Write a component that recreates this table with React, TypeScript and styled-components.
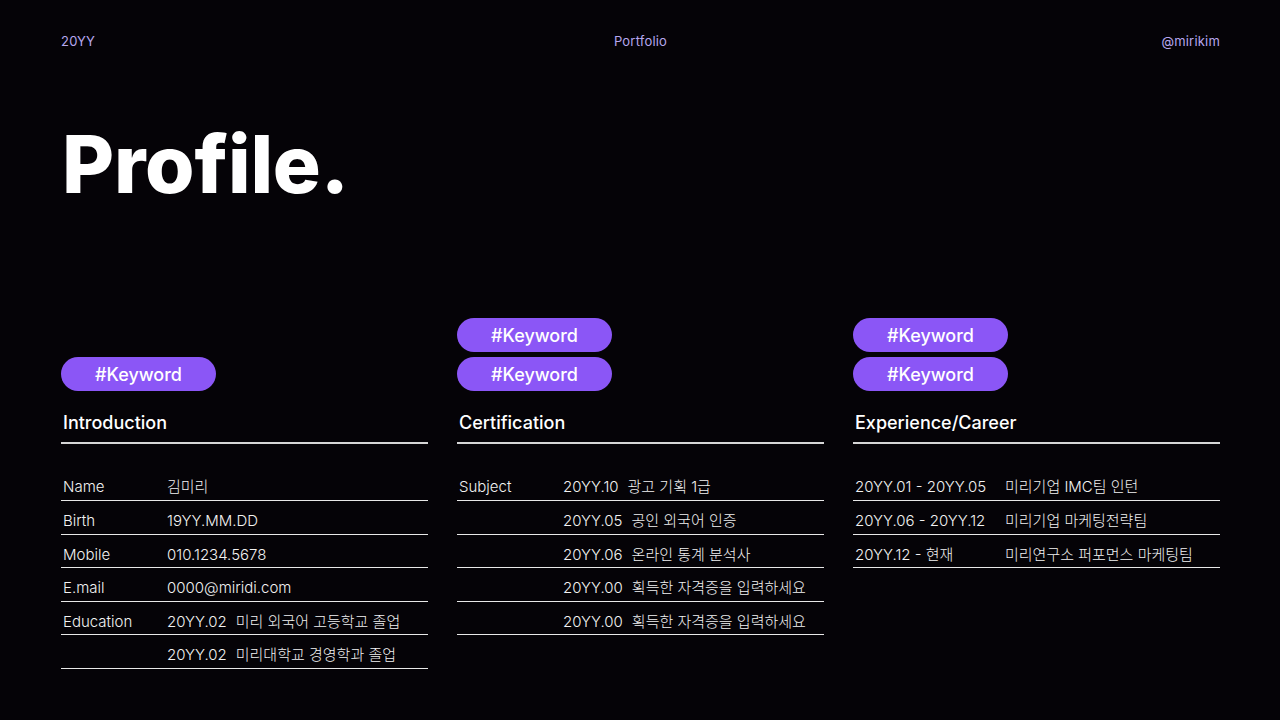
import React from "react";
import styled, { createGlobalStyle } from "styled-components";

const Global = createGlobalStyle`
  html, body { margin: 0; padding: 0; background: #050307; }
  body { font-family: Inter, "Noto Sans CJK KR", sans-serif; color: #fff; }
  * { box-sizing: border-box; }
`;

const Page = styled.div`
  width: 1280px;
  height: 720px;
  padding: 33px 60px 0 61px;
  background: #050307;
  overflow: hidden;
`;

const Header = styled.header`
  display: grid;
  grid-template-columns: 1fr auto 1fr;
  align-items: center;
  font-size: 13px;
  line-height: 16px;
  color: #b6a7ee;
  font-weight: 400;
  letter-spacing: 0.2px;
`;

const HeadItem = styled.span<{ $align: "left" | "center" | "right" }>`
  text-align: ${(p) => p.$align};
`;

const Title = styled.h1`
  margin: 75px 0 0 1px;
  font-size: 80px;
  line-height: 80px;
  font-weight: 800;
  letter-spacing: -0.2px;
  color: #fff;
`;

const Columns = styled.div`
  margin-top: 114px;
  display: grid;
  grid-template-columns: repeat(3, 367px);
  column-gap: 29px;
`;

const Column = styled.section``;

const PillStack = styled.div`
  height: 73px;
  display: flex;
  flex-direction: column;
  justify-content: flex-end;
  gap: 5px;
`;

const Pill = styled.div`
  width: 155px;
  height: 34px;
  border-radius: 17px;
  background: #8b56f6;
  color: #fff;
  font-size: 18px;
  font-weight: 500;
  display: flex;
  align-items: center;
  justify-content: center;
`;

const Heading = styled.h2`
  margin: 20px 0 0;
  padding: 0 0 7px 2px;
  font-size: 18px;
  line-height: 24px;
  font-weight: 500;
  border-bottom: 2px solid #d6d6d6;
`;

const Table = styled.div`
  margin-top: 23.4px;
`;

const Row = styled.div<{ $labelWidth: number }>`
  display: grid;
  grid-template-columns: ${(p) => p.$labelWidth}px 1fr;
  padding: 10px 0 2.6px 2px;
  border-bottom: 1px solid #e8e8e8;
  font-size: 15px;
  line-height: 20px;
  font-weight: 300;
  color: #f2f2f2;
  white-space: nowrap;
`;

const Cell = styled.span``;

const Gap = styled.span`
  display: inline-block;
  width: 9px;
`;

type Item = [string, string, string?];

const intro: Item[] = [
  ["Name", "김미리"],
  ["Birth", "19YY.MM.DD"],
  ["Mobile", "010.1234.5678"],
  ["E.mail", "0000@miridi.com"],
  ["Education", "20YY.02", "미리 외국어 고등학교 졸업"],
  ["", "20YY.02", "미리대학교 경영학과 졸업"],
];

const cert: Item[] = [
  ["Subject", "20YY.10", "광고 기획 1급"],
  ["", "20YY.05", "공인 외국어 인증"],
  ["", "20YY.06", "온라인 통계 분석사"],
  ["", "20YY.00", "획득한 자격증을 입력하세요"],
  ["", "20YY.00", "획득한 자격증을 입력하세요"],
];

const career: Item[] = [
  ["20YY.01 - 20YY.05", "미리기업 IMC팀 인턴"],
  ["20YY.06 - 20YY.12", "미리기업 마케팅전략팀"],
  ["20YY.12 - 현재", "미리연구소 퍼포먼스 마케팅팀"],
];

function Block({
  pills,
  title,
  items,
  labelWidth,
}: {
  pills: number;
  title: string;
  items: Item[];
  labelWidth: number;
}) {
  return (
    <Column>
      <PillStack>
        {Array.from({ length: pills }).map((_, i) => (
          <Pill key={i}>#Keyword</Pill>
        ))}
      </PillStack>
      <Heading>{title}</Heading>
      <Table>
        {items.map(([a, b, c], i) => (
          <Row key={i} $labelWidth={labelWidth}>
            <Cell>{a}</Cell>
            <Cell>
              {b}
              {c ? (
                <>
                  <Gap />
                  {c}
                </>
              ) : null}
            </Cell>
          </Row>
        ))}
      </Table>
    </Column>
  );
}

export default function App() {
  return (
    <Page>
      <Global />
      <Header>
        <HeadItem $align="left">20YY</HeadItem>
        <HeadItem $align="center">Portfolio</HeadItem>
        <HeadItem $align="right">@mirikim</HeadItem>
      </Header>
      <Title>Profile.</Title>
      <Columns>
        <Block pills={1} title="Introduction" items={intro} labelWidth={104} />
        <Block pills={2} title="Certification" items={cert} labelWidth={104} />
        <Block pills={2} title="Experience/Career" items={career} labelWidth={150} />
      </Columns>
    </Page>
  );
}
